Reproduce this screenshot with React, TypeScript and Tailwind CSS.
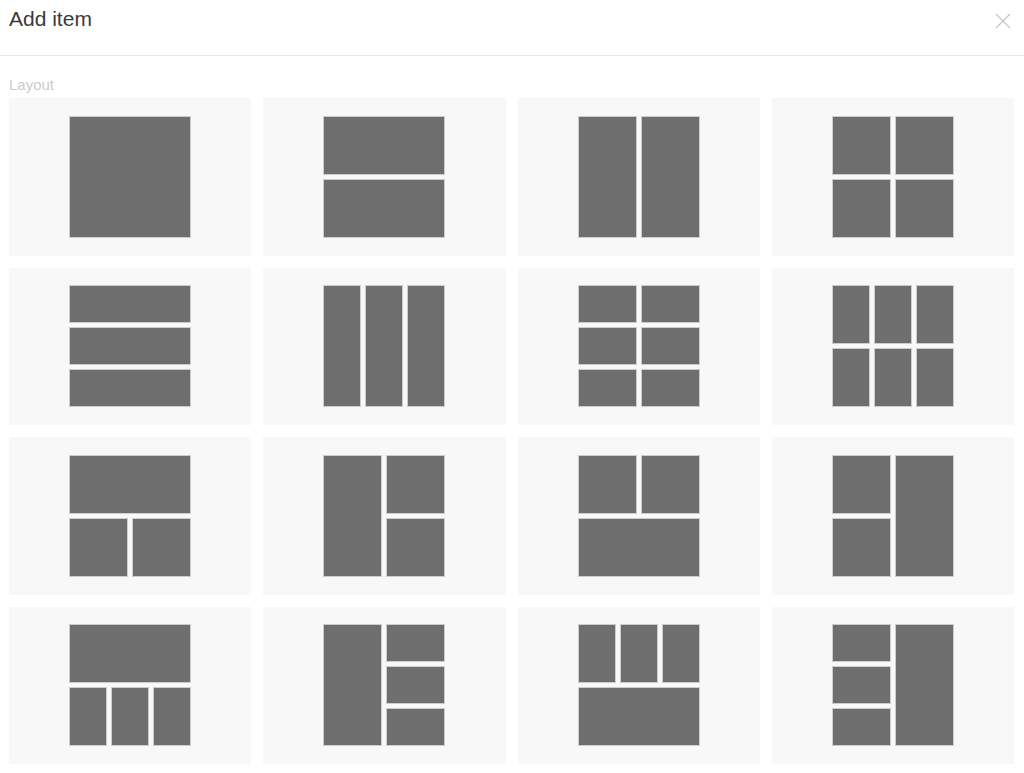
import React from 'react';

type Cell = { col?: string; row?: string };
type Layout = { cols: string; rows: string; cells: Cell[] };

const grid = (cols: number, rows: number): Layout => ({
  cols: cols === 1 ? 'grid-cols-1' : cols === 2 ? 'grid-cols-2' : 'grid-cols-3',
  rows: rows === 1 ? 'grid-rows-1' : rows === 2 ? 'grid-rows-2' : 'grid-rows-3',
  cells: Array.from({ length: cols * rows }, () => ({})),
});

const layouts: Layout[] = [
  grid(1, 1),
  grid(1, 2),
  grid(2, 1),
  grid(2, 2),
  grid(1, 3),
  grid(3, 1),
  grid(2, 3),
  grid(3, 2),
  { cols: 'grid-cols-2', rows: 'grid-rows-2', cells: [{ col: 'col-span-2' }, {}, {}] },
  { cols: 'grid-cols-2', rows: 'grid-rows-2', cells: [{ row: 'row-span-2' }, {}, {}] },
  { cols: 'grid-cols-2', rows: 'grid-rows-2', cells: [{}, {}, { col: 'col-span-2' }] },
  { cols: 'grid-cols-2', rows: 'grid-rows-2', cells: [{}, { row: 'row-span-2' }, {}] },
  { cols: 'grid-cols-3', rows: 'grid-rows-2', cells: [{ col: 'col-span-3' }, {}, {}, {}] },
  { cols: 'grid-cols-2', rows: 'grid-rows-3', cells: [{ row: 'row-span-3' }, {}, {}, {}] },
  { cols: 'grid-cols-3', rows: 'grid-rows-2', cells: [{}, {}, {}, { col: 'col-span-3' }] },
  { cols: 'grid-cols-2', rows: 'grid-rows-3', cells: [{}, { row: 'row-span-3' }, {}, {}] },
];

function LayoutTile({ layout }: { layout: Layout }) {
  return (
    <button className="h-[157.5px] bg-[#f8f8f8] flex items-center justify-center cursor-pointer">
      <div className={`grid ${layout.cols} ${layout.rows} gap-[4px] w-[122px] h-[122px]`}>
        {layout.cells.map((c, i) => (
          <div
            key={i}
            className={`${c.col ?? ''} ${c.row ?? ''} bg-[#6e6e6e] border border-[#cdcdcd]`}
          />
        ))}
      </div>
    </button>
  );
}

export default function App() {
  return (
    <div
      className="min-h-screen bg-white"
      style={{ fontFamily: '"Liberation Sans", Arial, sans-serif' }}
    >
      <div className="h-[56px] flex items-start justify-between pl-[9px] pr-[13px] border-b border-[#e6e6e6]">
        <h1 className="text-[21px] text-[#3a3a3a] leading-none pt-[8px]">Add item</h1>
        <button className="w-[16px] h-[16px] mt-[13px] text-[#c4c4c4]">
          <svg viewBox="0 0 16 16" width="16" height="16" fill="none" stroke="currentColor" strokeWidth="1.2">
            <path d="M1 1 L15 15 M15 1 L1 15" />
          </svg>
        </button>
      </div>
      <div className="px-[9px] pr-[10px]">
        <div className="text-[15px] text-[#cccccc] leading-none pt-[21px] pb-[6px]">Layout</div>
        <div className="grid grid-cols-4 gap-[12px]">
          {layouts.map((l, i) => (
            <LayoutTile key={i} layout={l} />
          ))}
        </div>
      </div>
    </div>
  );
}
